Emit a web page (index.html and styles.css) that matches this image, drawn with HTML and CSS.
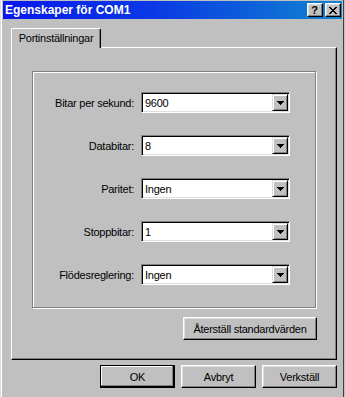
FILE: index.html
```html
<!DOCTYPE html>
<html lang="sv">
<head>
<meta charset="utf-8">
<title>Egenskaper för COM1</title>
<link rel="stylesheet" href="styles.css">
</head>
<body>
<div class="window">
  <div class="frame">
    <div class="titlebar">
      <span class="title">Egenskaper för COM1</span>
      <div class="tbuttons">
        <span class="tbtn help">?</span>
        <span class="tbtn close">
          <svg width="8" height="7" viewBox="0 0 8 7" shape-rendering="crispEdges"><path d="M0 0h2v1h-2z M6 0h2v1h-2z M1 1h2v1h-2z M5 1h2v1h-2z M2 2h4v1h-4z M3 3h2v1h-2z M2 4h4v1h-4z M1 5h2v1h-2z M5 5h2v1h-2z M0 6h2v1h-2z M6 6h2v1h-2z" fill="#000"/></svg>
        </span>
      </div>
    </div>
    <div class="content">
      <div class="tabs"><div class="tab">Portinställningar</div></div>
      <div class="panel">
        <div class="group">
          <div class="form">
            <label class="lbl">Bitar per sekund:</label>
            <div class="combo"><span class="val">9600</span><span class="drop"><svg width="7" height="4" viewBox="0 0 7 4" shape-rendering="crispEdges"><path d="M0 0h7v1h-7z M1 1h5v1h-5z M2 2h3v1h-3z M3 3h1v1h-1z" fill="#000"/></svg></span></div>
            <label class="lbl">Databitar:</label>
            <div class="combo"><span class="val">8</span><span class="drop"><svg width="7" height="4" viewBox="0 0 7 4" shape-rendering="crispEdges"><path d="M0 0h7v1h-7z M1 1h5v1h-5z M2 2h3v1h-3z M3 3h1v1h-1z" fill="#000"/></svg></span></div>
            <label class="lbl">Paritet:</label>
            <div class="combo"><span class="val">Ingen</span><span class="drop"><svg width="7" height="4" viewBox="0 0 7 4" shape-rendering="crispEdges"><path d="M0 0h7v1h-7z M1 1h5v1h-5z M2 2h3v1h-3z M3 3h1v1h-1z" fill="#000"/></svg></span></div>
            <label class="lbl">Stoppbitar:</label>
            <div class="combo"><span class="val">1</span><span class="drop"><svg width="7" height="4" viewBox="0 0 7 4" shape-rendering="crispEdges"><path d="M0 0h7v1h-7z M1 1h5v1h-5z M2 2h3v1h-3z M3 3h1v1h-1z" fill="#000"/></svg></span></div>
            <label class="lbl">Flödesreglering:</label>
            <div class="combo"><span class="val">Ingen</span><span class="drop"><svg width="7" height="4" viewBox="0 0 7 4" shape-rendering="crispEdges"><path d="M0 0h7v1h-7z M1 1h5v1h-5z M2 2h3v1h-3z M3 3h1v1h-1z" fill="#000"/></svg></span></div>
          </div>
        </div>
        <div class="panel-actions"><span class="btn wide">Återställ standardvärden</span></div>
      </div>
      <div class="actions">
        <span class="btn default">OK</span>
        <span class="btn">Avbryt</span>
        <span class="btn">Verkställ</span>
      </div>
    </div>
  </div>
</div>
</body>
</html>
```
FILE: styles.css
```css
html, body {
  margin: 0;
  padding: 0;
  background: #c0c0c0;
}
body {
  font-family: "Liberation Sans", Arial, sans-serif;
  font-size: 11px;
  letter-spacing: -0.25px;
  color: #000;
  width: 345px;
  height: 397px;
  overflow: hidden;
}
.window {
  width: 344px;
  height: 397px;
  box-sizing: border-box;
  border-left: 1px solid #dfdfdf;
  border-right: 1px solid #404040;
  background: #c0c0c0;
}
.frame {
  height: 100%;
  box-sizing: border-box;
  border-left: 1px solid #fff;
  padding: 1px 1px 0 1px;
}
.titlebar {
  height: 18px;
  display: flex;
  align-items: center;
  justify-content: space-between;
  padding: 0 1px 0 2px;
  background: linear-gradient(to right, #0818ec 0%, #0a3ae4 45%, #1084d0 100%);
}
.title {
  color: #fff;
  font-weight: bold;
  font-size: 12px;
  letter-spacing: 0;
  white-space: nowrap;
}
.tbuttons {
  display: flex;
  gap: 2px;
}
.tbtn {
  width: 16px;
  height: 14px;
  box-sizing: border-box;
  background: #c0c0c0;
  border: 1px solid;
  border-color: #fff #000 #000 #fff;
  box-shadow: inset -1px -1px #808080, inset 1px 1px #dfdfdf;
  display: flex;
  align-items: center;
  justify-content: center;
}
.help {
  font-weight: bold;
  font-size: 11px;
  letter-spacing: 0;
  line-height: 1;
  padding-right: 1px;
}
.close svg {
  display: block;
  margin-right: 1px;
}
.content {
  padding-top: 9px;
}
.tabs {
  display: flex;
  padding-left: 8px;
}
.tab {
  position: relative;
  width: 90px;
  height: 20px;
  box-sizing: border-box;
  margin-bottom: -1px;
  background: #c0c0c0;
  border-top: 1px solid #fff;
  border-left: 1px solid #fff;
  border-right: 1px solid #000;
  border-radius: 2px 2px 0 0;
  box-shadow: inset -1px 0 #808080;
  display: flex;
  align-items: center;
  justify-content: center;
  padding-bottom: 1px;
  white-space: nowrap;
}
.panel {
  margin-left: 8px;
  width: 326px;
  box-sizing: border-box;
  border-top: 1px solid #fff;
  border-left: 1px solid #fff;
  border-right: 1px solid #000;
  border-bottom: 1px solid #000;
  box-shadow: inset -1px -1px #808080;
  padding: 23px 0 19px 20px;
}
.group {
  width: 284px;
  box-sizing: border-box;
  border: 1px solid #808080;
  box-shadow: inset 1px 1px #fff, 1px 1px #fff;
  padding: 20px 0 22px 0;
}
.form {
  display: grid;
  grid-template-columns: 101px 149px;
  column-gap: 7px;
  row-gap: 22px;
  align-items: center;
}
.lbl {
  text-align: right;
  white-space: nowrap;
}
.combo {
  height: 21px;
  box-sizing: border-box;
  background: #fff;
  border: 1px solid;
  border-color: #808080 #fff #fff #808080;
  box-shadow: inset 1px 1px #000, inset -1px -1px #dfdfdf;
  display: flex;
  align-items: center;
  justify-content: space-between;
  padding: 1px 1px 1px 3px;
}
.val {
  white-space: nowrap;
}
.drop {
  width: 16px;
  height: 17px;
  box-sizing: border-box;
  background: #c0c0c0;
  border: 1px solid;
  border-color: #dfdfdf #000 #000 #dfdfdf;
  box-shadow: inset 1px 1px #fff, inset -1px -1px #808080;
  display: flex;
  align-items: center;
  justify-content: center;
}
.drop svg {
  display: block;
}
.panel-actions {
  width: 285px;
  display: flex;
  justify-content: flex-end;
  margin-top: 9px;
}
.btn {
  width: 75px;
  height: 23px;
  box-sizing: border-box;
  background: #c0c0c0;
  border: 1px solid;
  border-color: #fff #000 #000 #fff;
  box-shadow: inset -1px -1px #808080, inset 1px 1px #dfdfdf;
  display: flex;
  align-items: center;
  justify-content: center;
  white-space: nowrap;
}
.btn.wide {
  width: 134px;
}
.btn.default {
  border-color: #000;
  box-shadow: inset -1px -1px #000, inset -2px -2px #808080, inset 1px 1px #fff;
}
.actions {
  margin-left: 8px;
  width: 326px;
  margin-top: 5px;
  display: flex;
  justify-content: flex-end;
  gap: 6px;
}
```
